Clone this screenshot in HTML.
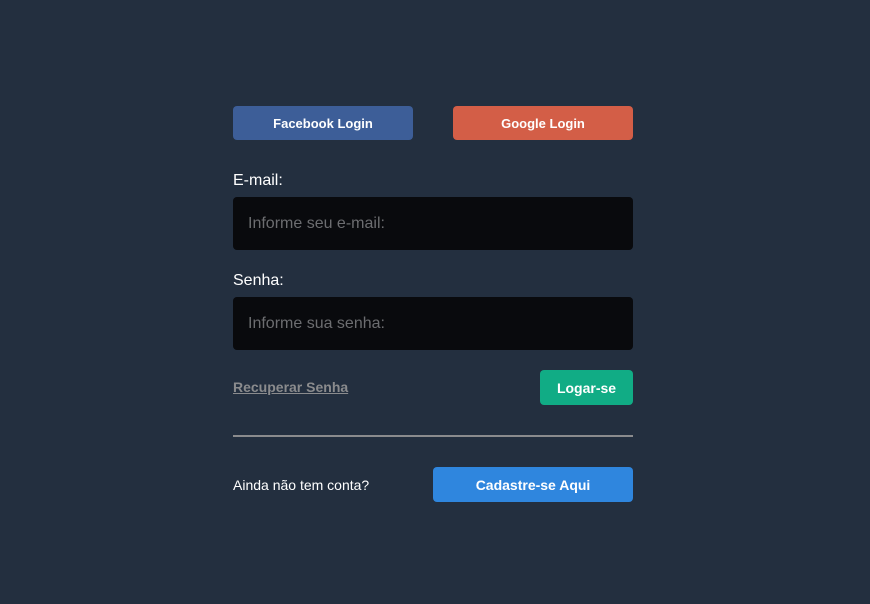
<!DOCTYPE html>
<html><head><meta charset="utf-8"><style>
body{margin:0;width:870px;height:604px;background:#232f3f;font-family:"Liberation Sans",sans-serif;position:relative;overflow:hidden}
.a{position:absolute;box-sizing:border-box}
.btn{border-radius:4px;color:#fff;font-weight:bold;font-size:13px;display:flex;align-items:center;justify-content:center}
.inp{background:#090a0d;border-radius:4px;color:#6c6d70;font-size:16px;padding-left:15px;display:flex;align-items:center}
.lbl{color:#fff;font-size:16px}
</style></head><body>
<div class="a btn" style="left:233px;top:106px;width:180px;height:34px;background:#3d5e98">Facebook Login</div>
<div class="a btn" style="left:453px;top:106px;width:180px;height:34px;background:#d35e47">Google Login</div>
<div class="a lbl" style="left:233px;top:172px">E-mail:</div>
<div class="a inp" style="left:233px;top:197px;width:400px;height:53px">Informe seu e-mail:</div>
<div class="a lbl" style="left:233px;top:272px">Senha:</div>
<div class="a inp" style="left:233px;top:297px;width:400px;height:53px">Informe sua senha:</div>
<div class="a" style="left:233px;top:379px;color:#8a8b8d;font-size:14px;font-weight:bold;text-decoration:underline">Recuperar Senha</div>
<div class="a btn" style="left:540px;top:370px;width:93px;height:35px;background:#11ac85;font-size:14px">Logar-se</div>
<div class="a" style="left:233px;top:435px;width:400px;height:2px;background:#8a8b8d"></div>
<div class="a" style="left:233px;top:477px;color:#fff;font-size:14px">Ainda não tem conta?</div>
<div class="a btn" style="left:433px;top:467px;width:200px;height:35px;background:#2f86de;font-size:14px">Cadastre-se Aqui</div>
</body></html>
